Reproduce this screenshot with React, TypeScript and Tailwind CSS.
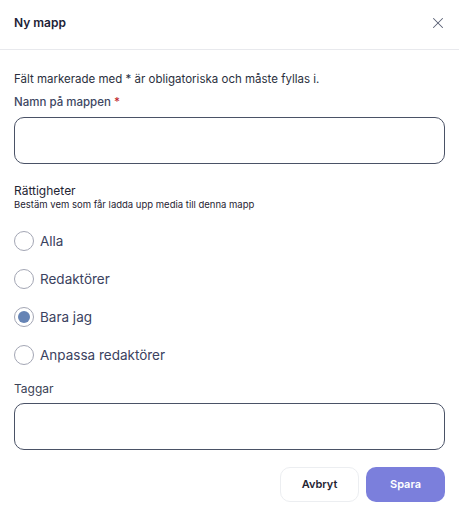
import React, { useState } from 'react';
import { X } from 'lucide-react';

const options = ['Alla', 'Redaktörer', 'Bara jag', 'Anpassa redaktörer'];

export default function App() {
  const [selected, setSelected] = useState('Bara jag');

  return (
    <div className="w-[459px] h-[511px] bg-white text-[#1f2433]" style={{ fontFamily: 'Inter, "Noto Sans", sans-serif' }}>
      {/* Header */}
      <div className="flex items-center justify-between h-[50px] pl-[14px] pr-[12px] pb-[4px] border-b border-[#e8e9ed]">
        <h2 className="text-[12px] font-semibold text-[#1c2236]">Ny mapp</h2>
        <button className="text-[#5a6175]">
          <X className="h-[18px] w-[18px]" strokeWidth={1.4} />
        </button>
      </div>

      {/* Body */}
      <div className="px-[14px] pt-[21px]">
        <p className="text-[11.5px] leading-[16px] text-[#2a2f3d]">
          Fält markerade med * är obligatoriska och måste fyllas i.
        </p>

        <label className="block mt-[7px] text-[11.5px] leading-[16px] font-medium text-[#3d4662]">
          Namn på mappen <span className="text-[#c0262d]">*</span>
        </label>
        <input className="mt-[7px] block w-full h-[47px] rounded-[10px] border border-[#4a5266] px-3 outline-none" />

        <div className="mt-[19px] text-[12px] leading-[16px] text-[#1f2433]">Rättigheter</div>
        <div className="text-[9.5px] leading-[12px] text-[#1f2433]">Bestäm vem som får ladda upp media till denna mapp</div>

        <div className="mt-[11px] flex flex-col">
          {options.map((opt) => (
            <label key={opt} className="flex items-center h-[38px] gap-[6px] cursor-pointer" onClick={() => setSelected(opt)}>
              <span className="flex items-center justify-center h-[20px] w-[20px] rounded-full border border-[#a3a6b4] bg-white">
                {selected === opt && <span className="h-[12px] w-[12px] rounded-full bg-[#6684b5]" />}
              </span>
              <span className="text-[13.5px] text-[#3b4260]">{opt}</span>
            </label>
          ))}
        </div>

        <label className="block mt-[7px] text-[12px] leading-[16px] text-[#3b4256]">Taggar</label>
        <input className="mt-[6px] block w-full h-[47px] rounded-[10px] border border-[#4a5266] px-3 outline-none" />

        <div className="mt-[17px] flex justify-end gap-[7px]">
          <button className="h-[35px] w-[79px] rounded-[10px] border border-[#eceef1] bg-white text-[11px] font-semibold text-[#1f2433]">
            Avbryt
          </button>
          <button className="h-[35px] w-[79px] rounded-[10px] bg-[#7b7fdc] text-[11px] font-semibold text-white">
            Spara
          </button>
        </div>
      </div>
    </div>
  );
}
